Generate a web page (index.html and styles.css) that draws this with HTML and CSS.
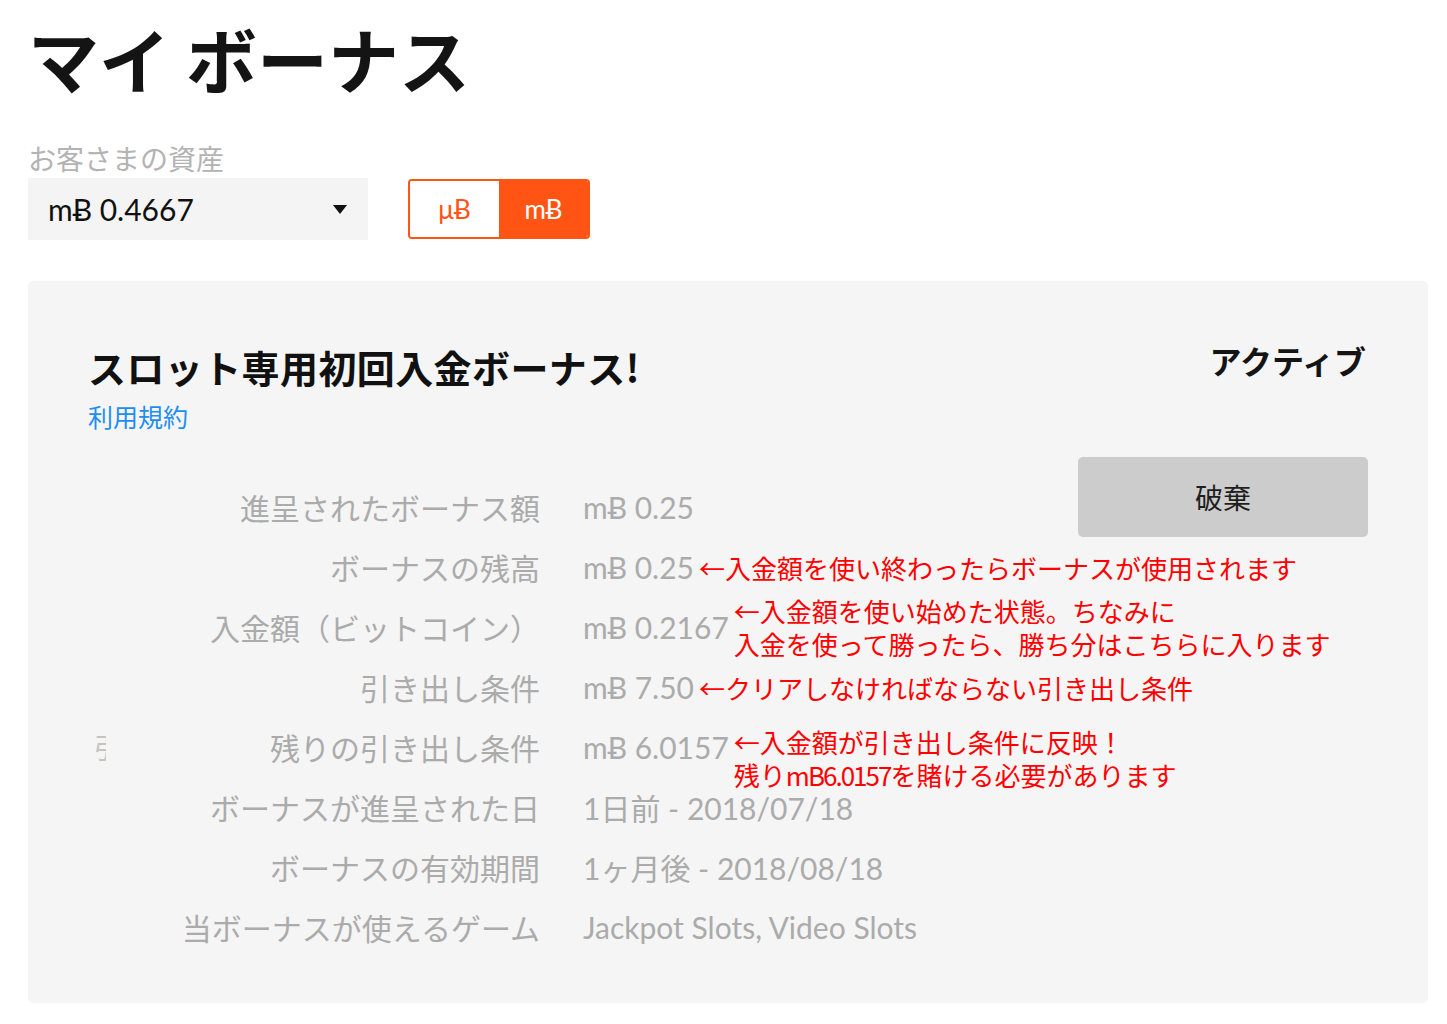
FILE: index.html
```html
<!DOCTYPE html>
<html lang="ja">
<head>
<meta charset="utf-8">
<title>マイ ボーナス</title>
<link rel="stylesheet" href="styles.css">
</head>
<body>
<main class="page">
  <h1 class="page-title">マイ ボーナス</h1>

  <div class="assets">
    <div class="assets-label">お客さまの資産</div>
    <div class="assets-controls">
      <div class="select">
        <span class="select-value">mɃ 0.4667</span>
        <span class="caret"></span>
      </div>
      <div class="unit-toggle">
        <span class="unit">μɃ</span>
        <span class="unit unit-active">mɃ</span>
      </div>
    </div>
  </div>

  <section class="bonus-card">
    <header class="bonus-head">
      <div class="bonus-head-main">
        <h2 class="bonus-title">スロット専用初回入金ボーナス!</h2>
        <a class="terms-link">利用規約</a>
      </div>
      <div class="bonus-status">アクティブ</div>
    </header>

    <div class="bonus-body">
      <div class="details">
        <div class="label">進呈されたボーナス額</div>
        <div class="value">mɃ 0.25</div>

        <div class="label">ボーナスの残高</div>
        <div class="value">mɃ 0.25<span class="note">←入金額を使い終わったらボーナスが使用されます</span></div>

        <div class="label">入金額（ビットコイン）</div>
        <div class="value">mɃ 0.2167<span class="note note-wide"><span class="note-line">←入金額を使い始めた状態。ちなみに</span><span class="note-line">入金を使って勝ったら、勝ち分はこちらに入ります</span></span></div>

        <div class="label">引き出し条件</div>
        <div class="value">mɃ 7.50<span class="note">←クリアしなければならない引き出し条件</span></div>

        <div class="label label-split"><span class="ghost">引</span><span>残りの引き出し条件</span></div>
        <div class="value">mɃ 6.0157<span class="note note-wide note-low"><span class="note-line">←入金額が引き出し条件に反映！</span><span class="note-line">残り<span class="note-num">mB6.0157</span>を賭ける必要があります</span></span></div>

        <div class="label">ボーナスが進呈された日</div>
        <div class="value">1日前 - 2018/07/18</div>

        <div class="label">ボーナスの有効期間</div>
        <div class="value">1ヶ月後 - 2018/08/18</div>

        <div class="label">当ボーナスが使えるゲーム</div>
        <div class="value">Jackpot Slots, Video Slots</div>
      </div>

      <button class="discard" type="button">破棄</button>
    </div>
  </section>
</main>
</body>
</html>
```

FILE: styles.css
```css
* { box-sizing: border-box; }

html, body {
  margin: 0;
  padding: 0;
  background: #ffffff;
}

body {
  font-family: Lato, "Noto Sans CJK JP", sans-serif;
  color: #111111;
}

.page {
  width: 1400px;
  margin-left: 28px;
  padding-top: 22px;
}

.page-title {
  margin: 0;
  font-family: "Noto Sans CJK JP", sans-serif;
  font-size: 71px;
  line-height: 71px;
  font-weight: 700;
  color: #141414;
}

.assets {
  margin-top: 48px;
}

.assets-label {
  font-family: "Noto Sans CJK JP", sans-serif;
  font-size: 28px;
  line-height: 34px;
  color: #b3b3b3;
}

.assets-controls {
  margin-top: 3px;
  display: flex;
  align-items: center;
  gap: 40px;
}

.select {
  width: 340px;
  height: 62px;
  background: #f4f4f4;
  display: flex;
  align-items: center;
  justify-content: space-between;
  padding: 0 21px 0 20px;
}

.select-value {
  font-size: 30px;
  color: #111111;
}

.caret {
  width: 0;
  height: 0;
  border-left: 7px solid transparent;
  border-right: 7px solid transparent;
  border-top: 9px solid #111111;
}

.unit-toggle {
  display: flex;
  width: 182px;
  height: 60px;
  border: 2px solid #ff5414;
  border-radius: 4px;
  overflow: hidden;
}

.unit {
  flex: 1;
  display: flex;
  align-items: center;
  justify-content: center;
  font-size: 26px;
  color: #ff5414;
  background: #ffffff;
}

.unit-active {
  background: #ff5414;
  color: #ffffff;
}

.bonus-card {
  margin-top: 41px;
  background: #f5f5f5;
  border-radius: 5px;
  padding: 58px 60px 46px;
}

.bonus-head {
  display: flex;
  justify-content: space-between;
  align-items: flex-start;
}

.bonus-title {
  margin: 0;
  font-family: "Noto Sans CJK JP", sans-serif;
  font-size: 38px;
  line-height: 56px;
  font-weight: 700;
  letter-spacing: 0.4px;
  color: #111111;
}

.terms-link {
  display: block;
  margin-top: 2px;
  font-family: "Noto Sans CJK JP", sans-serif;
  font-size: 25px;
  line-height: 38px;
  color: #1f8ef1;
  cursor: pointer;
}

.bonus-status {
  font-family: "Noto Sans CJK JP", sans-serif;
  font-size: 32px;
  line-height: 40px;
  font-weight: 700;
  color: #141414;
  margin-top: 1px;
  margin-right: 2px;
}

.bonus-body {
  margin-top: 22px;
  display: flex;
  justify-content: space-between;
  align-items: flex-start;
}

.details {
  flex: 1;
  min-width: 0;
  padding-top: 20px;
  display: grid;
  grid-template-columns: 452px minmax(0, 1fr);
  column-gap: 43px;
  grid-auto-rows: 60px;
  align-items: center;
}

.label {
  text-align: right;
  font-family: "Noto Sans CJK JP", sans-serif;
  font-size: 30px;
  line-height: 40px;
  color: #ababab;
  white-space: nowrap;
}

.label-split {
  display: flex;
  justify-content: space-between;
  align-items: center;
}

.ghost {
  display: inline-block;
  width: 12px;
  margin-left: 6px;
  overflow: hidden;
  color: #c4c4c4;
  font-size: 28px;
}

.value {
  display: flex;
  align-items: center;
  height: 60px;
  font-family: Lato, "Noto Sans CJK JP", sans-serif;
  font-size: 30px;
  color: #ababab;
  white-space: nowrap;
  overflow: visible;
}

.note {
  margin-left: 5px;
  font-family: "Noto Sans CJK JP", sans-serif;
  font-size: 26px;
  line-height: 33px;
  color: #ff0000;
  white-space: nowrap;
}

.note-wide {
  display: flex;
  flex-direction: column;
}

.note-line {
  display: block;
}

.note-num {
  letter-spacing: -2px;
}

.note-low {
  margin-top: 22px;
}

.discard {
  width: 290px;
  height: 80px;
  border: none;
  border-radius: 5px;
  background: #cccccc;
  font-family: "Noto Sans CJK JP", sans-serif;
  font-size: 28px;
  color: #1e1e1e;
  padding: 0;
  flex-shrink: 0;
}
```
